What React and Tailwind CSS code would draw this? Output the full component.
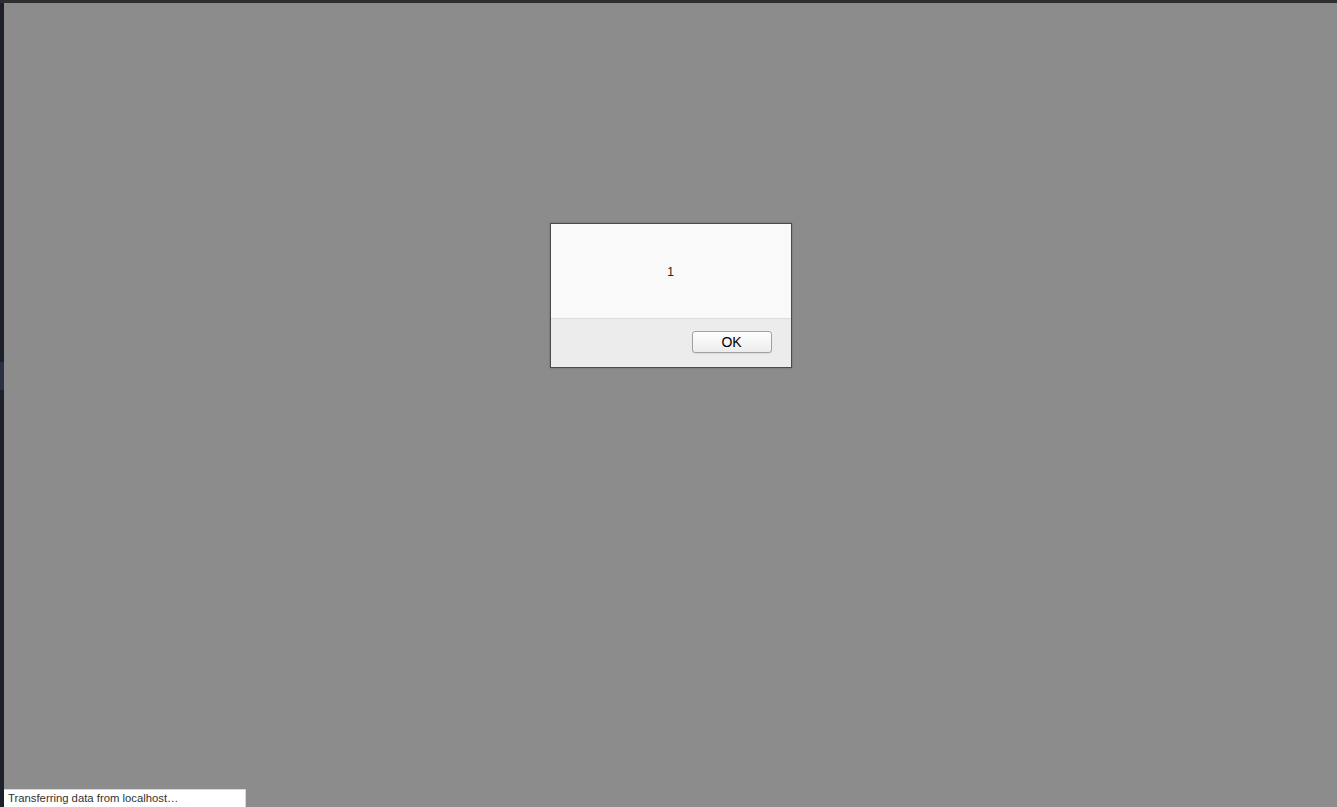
export default function App() {
  return (
    <div className="flex h-[807px] w-[1337px] flex-col overflow-hidden bg-[#8c8c8c] font-['Liberation_Sans',Arial,sans-serif]">
      <div className="h-[3px] w-full shrink-0 bg-[#2e2e2e]" />
      <div className="relative flex flex-1">
        <div className="flex w-1 shrink-0 flex-col bg-[#1d2028]">
          <div className="h-[359px]" />
          <div className="h-[28px] bg-[#2b3142]" />
        </div>
        <div className="flex flex-1 flex-col items-center pt-[220px]">
          <div className="flex h-[145px] w-[242px] flex-col border border-[#4a4a4a] bg-[#f9f9f9] shadow-[0_0_2px_rgba(0,0,0,0.25)]">
            <div className="flex h-[95px] items-center justify-center border-b border-[#dcdcdc] pt-[1px] text-[12px] text-[#222]">
              1
            </div>
            <div className="flex flex-1 items-center justify-end bg-[#ececec] pb-[2px] pr-[19px]">
              <button className="h-[22px] w-[80px] rounded-[3px] border border-[#a2a2a2] bg-gradient-to-b from-[#ffffff] to-[#ececec] text-[14px] leading-none text-black shadow-[0_1px_1px_rgba(0,0,0,0.08)]">
                OK
              </button>
            </div>
          </div>
        </div>
        <div className="absolute bottom-0 left-1 flex h-[18px] w-[242px] items-center border-t border-r border-[#d8d8d8] bg-white pl-1 text-[11.3px] text-[#333]">
          Transferring data from localhost…
        </div>
      </div>
    </div>
  );
}
